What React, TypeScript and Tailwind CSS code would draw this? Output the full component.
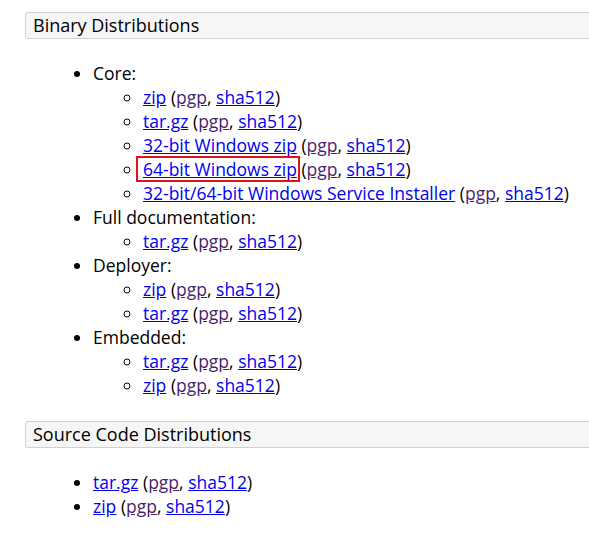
import React from 'react';

type Sig = { label: string; highlight?: boolean };

const font = { fontFamily: '"Open Sans", "Liberation Sans", sans-serif' };

function Link({ children }: { children: React.ReactNode }) {
  return <a href="#" className="text-[#0000ee] underline">{children}</a>;
}

function Download({ label, highlight }: Sig) {
  return (
    <>
      {highlight ? (
        <span className="relative">
          <Link>{label}</Link>
          <span className="absolute -left-[7px] -right-[3px] -top-[1px] -bottom-[1px] border-2 border-[#e0121a] pointer-events-none" />
        </span>
      ) : (
        <Link>{label}</Link>
      )}{' '}
      (<a href="#" className="text-[#4a1f6e] underline">pgp</a>, <Link>sha512</Link>)
    </>
  );
}

function SectionHeader({ title }: { title: string }) {
  return (
    <h3 className="ml-[25px] -mr-2 h-[27px] rounded-[3px] border border-[#d0d0d0] bg-[#f6f6f6] pl-[7px] text-[18px] leading-[25px] font-medium text-black">
      {title}
    </h3>
  );
}

const binary: { name: string; items: Sig[] }[] = [
  {
    name: 'Core:',
    items: [
      { label: 'zip' },
      { label: 'tar.gz' },
      { label: '32-bit Windows zip' },
      { label: '64-bit Windows zip', highlight: true },
      { label: '32-bit/64-bit Windows Service Installer' },
    ],
  },
  { name: 'Full documentation:', items: [{ label: 'tar.gz' }] },
  { name: 'Deployer:', items: [{ label: 'zip' }, { label: 'tar.gz' }] },
  { name: 'Embedded:', items: [{ label: 'tar.gz' }, { label: 'zip' }] },
];

export default function App() {
  return (
    <div className="w-[589px] h-[535px] overflow-hidden bg-white pt-[12px] text-[17.5px] leading-[24px] text-black" style={font}>
      <SectionHeader title="Binary Distributions" />
      <ul className="list-disc pl-[93px] pt-[22px] pb-[24px]">
        {binary.map((group) => (
          <li key={group.name}>
            {group.name}
            <ul className="list-[circle] pl-[50px]">
              {group.items.map((it, i) => (
                <li key={i}>
                  <Download {...it} />
                </li>
              ))}
            </ul>
          </li>
        ))}
      </ul>

      <SectionHeader title="Source Code Distributions" />
      <ul className="list-disc pl-[93px] pt-[22px]">
        <li>
          <Download label="tar.gz" />
        </li>
        <li>
          <Download label="zip" />
        </li>
      </ul>
    </div>
  );
}
